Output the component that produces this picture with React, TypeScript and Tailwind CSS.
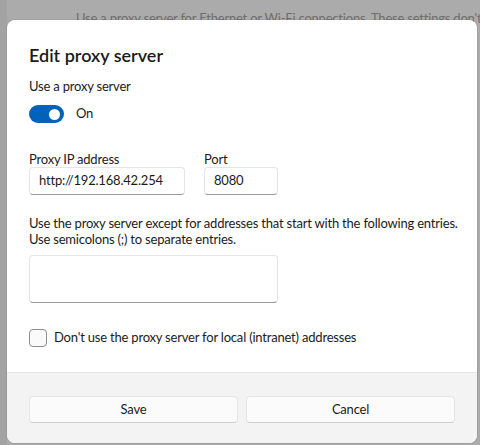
export default function App() {
  const font = { fontFamily: 'Lato, "Open Sans", sans-serif' };

  return (
    <div className="relative h-[445px] w-[480px] overflow-hidden bg-[#ababab] tracking-[-0.2px]" style={font}>
      {/* settings page behind the dimmed overlay */}
      <div className="flex h-full">
        <div className="w-[7px] bg-[#a3a3a3]" />
        <div className="flex-1 overflow-hidden pt-[8px] pl-[69px] text-[13px] leading-5 whitespace-nowrap text-[#6e6e6e]">
          Use a proxy server for Ethernet or Wi-Fi connections. These settings don't
        </div>
      </div>

      {/* dialog */}
      <div className="absolute top-[20px] left-[7px] flex h-[423px] w-[470px] flex-col overflow-hidden rounded-lg bg-white text-[#1b1b1b] shadow-[0_0_0_1px_rgba(0,0,0,0.06)]">
        <div className="flex flex-1 flex-col px-[22px]">
          <h1 className="mt-[21px] text-[18px] leading-7 font-semibold tracking-normal">Edit proxy server</h1>

          <div className="mt-[7px] text-[13px] leading-5">Use a proxy server</div>
          <div className="mt-[8px] flex h-[20px] items-center gap-[12px]">
            <div className="flex h-[18px] w-[35px] items-center justify-end rounded-full bg-[#0062b9] px-[4px]">
              <div className="h-[11px] w-[11px] rounded-full bg-white" />
            </div>
            <span className="text-[13px]">On</span>
          </div>

          <div className="mt-[27px] flex gap-[19px]">
            <div className="flex flex-col">
              <label className="text-[13px] leading-4">Proxy IP address</label>
              <div className="flex h-[28px] w-[156px] items-center rounded-[4px] border border-[#e5e5e5] border-b-[#9a9a9a] px-[9px] text-[13px]">
                http://192.168.42.254
              </div>
            </div>
            <div className="flex flex-col">
              <label className="text-[13px] leading-4">Port</label>
              <div className="flex h-[28px] w-[74px] items-center rounded-[4px] border border-[#e5e5e5] border-b-[#9a9a9a] px-[9px] text-[13px]">
                8080
              </div>
            </div>
          </div>

          <p className="mt-[20px] text-[13px] leading-4 whitespace-nowrap">
            Use the proxy server except for addresses that start with the following entries.
            <br />
            Use semicolons (;) to separate entries.
          </p>
          <div className="mt-[8px] h-[48px] w-[249px] rounded-[4px] border border-[#e5e5e5] border-b-[#9a9a9a]" />

          <div className="mt-[25px] flex items-center gap-[7px]">
            <div className="h-[18px] w-[18px] rounded-[4px] border border-[#8d8d8d] bg-[#fafafa]" />
            <span className="text-[13px]">Don't use the proxy server for local (intranet) addresses</span>
          </div>
        </div>

        <div className="flex h-[71px] gap-[8px] border-t border-[#e8e8e8] bg-[#f3f3f3] px-[22px] pt-[23px]">
          <button className="h-[27px] flex-1 rounded-[4px] border border-[#e5e5e5] border-b-[#cfcfcf] bg-[#fbfbfb] text-[13px] text-[#1b1b1b]">
            Save
          </button>
          <button className="h-[27px] flex-1 rounded-[4px] border border-[#e5e5e5] border-b-[#cfcfcf] bg-[#fbfbfb] text-[13px] text-[#1b1b1b]">
            Cancel
          </button>
        </div>
      </div>
    </div>
  );
}
